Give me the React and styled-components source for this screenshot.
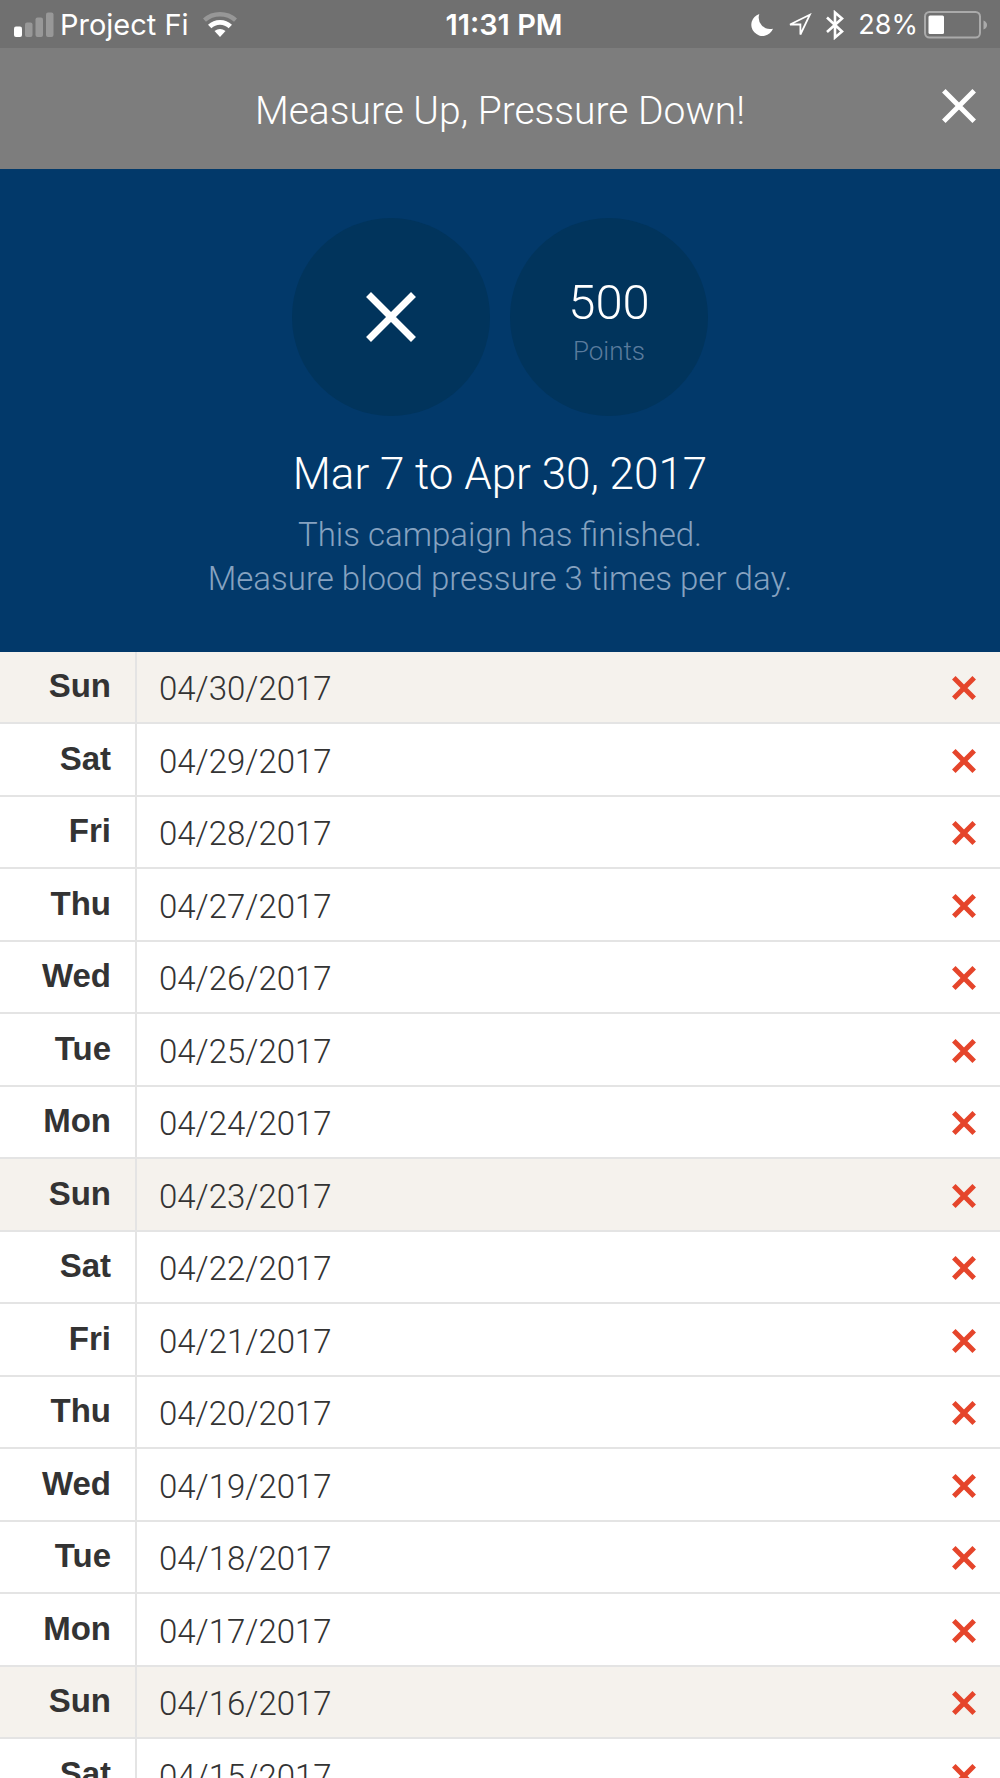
import React from 'react';
import styled, { createGlobalStyle } from 'styled-components';

const GlobalStyle = createGlobalStyle`
  *, *::before, *::after { box-sizing: border-box; }
  html { scrollbar-width: none; }
  body { margin: 0; background: #fff; font-family: Roboto, 'Liberation Sans', sans-serif; font-weight: 300; color: #333; }
`;

const Screen = styled.div`
  display: flex;
  flex-direction: column;
  height: 100vh;
  overflow: hidden;
`;

const StatusBar = styled.div`
  flex: none;
  display: grid;
  grid-template-columns: 1fr auto 1fr;
  align-items: center;
  height: 48px;
  padding: 2px 12px 0 14px;
  background: #707070;
  color: #fff;
  font-family: Inter, 'Liberation Sans', sans-serif;
  font-size: 29px;
  line-height: 46px;
  font-weight: 400;
`;

const StatusGroup = styled.div`
  display: flex;
  align-items: center;
  justify-content: ${(p) => (p.$end ? 'flex-end' : 'flex-start')};
  gap: ${(p) => (p.$end ? '14px' : '6px')};
  svg { display: block; flex: none; }
`;

const Carrier = styled.span`
  padding-right: 8px;
  white-space: nowrap;
`;

const Clock = styled.time`
  padding-left: 6px;
  font-weight: 600;
  white-space: nowrap;
`;

const Power = styled.span`
  display: flex;
  align-items: center;
  gap: 6px;
  font-size: 27px;
`;

const TitleBar = styled.header`
  flex: none;
  display: grid;
  grid-template-columns: 72px 1fr 72px;
  align-items: center;
  height: 121px;
  padding: 0 5px;
  background: #7d7d7d;
  color: #fff;
`;

const Title = styled.h1`
  grid-column: 2;
  margin: 0;
  padding-top: 4px;
  font-size: 39px;
  line-height: 48px;
  font-weight: 300;
  text-align: center;
`;

const CloseButton = styled.button`
  display: grid;
  place-items: center;
  width: 72px;
  height: 72px;
  margin-bottom: 6px;
  padding: 0;
  border: 0;
  background: none;
  color: inherit;
  cursor: pointer;
`;

const Hero = styled.section`
  flex: none;
  display: flex;
  flex-direction: column;
  align-items: center;
  padding: 49px 24px 39px;
  background: #02396a;
  color: #fff;
  text-align: center;
`;

const Badges = styled.div`
  display: flex;
  gap: 20px;
`;

const Badge = styled.div`
  display: flex;
  flex-direction: column;
  align-items: center;
  justify-content: center;
  width: 198px;
  height: 198px;
  border-radius: 50%;
  background: #01345c;
`;

const Score = styled.strong`
  padding-top: 8px;
  font-size: 49px;
  line-height: 60px;
  font-weight: 300;
`;

const ScoreLabel = styled.span`
  font-size: 26px;
  line-height: 36px;
  color: #5a7b9d;
`;

const Period = styled.h2`
  margin: 30px 0 0;
  font-size: 44px;
  line-height: 56px;
  font-weight: 300;
`;

const Description = styled.p`
  margin: 11px 0 0;
  padding-bottom: 12px;
  font-size: 33px;
  line-height: 44px;
  color: #86a2c0;
`;

const Log = styled.main`
  flex: 1;
  min-height: 0;
  overflow-y: auto;
  scrollbar-width: none;
`;

const DayTable = styled.table`
  width: 100%;
  border-collapse: separate;
  border-spacing: 0;
  table-layout: fixed;
`;

const DayRow = styled.tr`
  height: 72px;
  background: ${(p) => (p.$weekStart ? '#f5f2ed' : '#fff')};
  &:nth-child(even) { height: 73px; }
`;

const DayName = styled.th`
  width: 137px;
  padding: 0 24px 2px 0;
  border-right: 2px solid #e4e4e4;
  border-bottom: 2px solid #e4e4e4;
  font-family: 'Liberation Sans', sans-serif;
  font-size: 33px;
  line-height: 40px;
  font-weight: 700;
  text-align: right;
`;

const DayDate = styled.td`
  padding: 4px 0 0 22px;
  border-bottom: 2px solid #e4e4e4;
  font-size: 33px;
  line-height: 40px;
`;

const DayResult = styled.td`
  width: 80px;
  padding: 2px 24px 0 0;
  border-bottom: 2px solid #e4e4e4;
  color: #e5452b;
  svg { display: block; margin-left: auto; }
`;

function Cross({ size, stroke, label }) {
  const a = stroke * 0.36;
  const b = size - a;
  return (
    <svg width={size} height={size} viewBox={`0 0 ${size} ${size}`} role={label ? 'img' : undefined} aria-label={label} aria-hidden={label ? undefined : true}>
      <path d={`M${a} ${a}L${b} ${b}M${b} ${a}L${a} ${b}`} stroke="currentColor" strokeWidth={stroke} />
    </svg>
  );
}

const Signal = () => (
  <svg width="40" height="26" viewBox="0 0 40 26" fill="#fff" aria-hidden="true">
    <rect x="0" y="14.5" width="8" height="10.5" rx="2" />
    <g opacity="0.28">
      <rect x="11" y="10.5" width="7.5" height="14.5" rx="2" />
      <rect x="21.5" y="5.5" width="7.5" height="19.5" rx="2" />
      <rect x="32" y="0.5" width="7.5" height="24.5" rx="2" />
    </g>
  </svg>
);

const Wifi = () => (
  <svg width="34" height="26" viewBox="0 0 34 26" fill="none" stroke="#fff" aria-hidden="true">
    <path d="M1.5 8.2Q8 2.3 17 2.3T32.5 8.2" strokeWidth="4.4" opacity="0.28" />
    <path d="M6.7 14.5Q11 10.3 17 10.3T27.3 14.5" strokeWidth="4.8" />
    <path d="M11.5 19Q17 15.2 22.5 19L17 25Z" fill="#fff" stroke="none" />
  </svg>
);

const Moon = () => (
  <svg width="22" height="22" viewBox="0 0 22 22" fill="#fff" aria-hidden="true">
    <path d="M8.3 0A11.2 11.2 0 1 0 22 14.7A11.5 11.5 0 0 1 8.3 0Z" />
  </svg>
);

const Locate = () => (
  <svg width="25" height="25" viewBox="0 0 25 25" fill="none" stroke="#fff" strokeWidth="1.8" aria-hidden="true">
    <path d="M3 11.5L22.8 1.8L13.4 21.5V11.5Z" />
  </svg>
);

const Bluetooth = () => (
  <svg width="18" height="30" viewBox="0 0 18 30" fill="none" stroke="#fff" strokeWidth="2.6" aria-hidden="true">
    <path d="M1 7.500L16 21.500L9 27.500V2.500L16 8.500L1 22" />
  </svg>
);

const Battery = () => (
  <svg width="64" height="28" viewBox="0 0 64 28" fill="none" aria-hidden="true">
    <rect x="1" y="1" width="55" height="25.5" rx="4.5" stroke="#aaa" strokeWidth="2" />
    <path d="M59.5 9.5Q63 11 63 14T59.5 18.5Z" fill="#aaa" />
    <rect x="4.5" y="4.5" width="15.5" height="18.5" rx="1.5" fill="#fff" />
  </svg>
);

const weekdays = ['Sun', 'Mon', 'Tue', 'Wed', 'Thu', 'Fri', 'Sat'];

const days = Array.from({ length: 16 }, (_, i) => {
  const day = 30 - i;
  return { name: weekdays[new Date(2017, 3, day).getDay()], date: `04/${day}/2017` };
});

export default function App() {
  return (
    <Screen>
      <GlobalStyle />
      <StatusBar>
        <StatusGroup>
          <Signal />
          <Carrier>Project Fi</Carrier>
          <Wifi />
        </StatusGroup>
        <Clock dateTime="23:31">11:31 PM</Clock>
        <StatusGroup $end>
          <Moon />
          <Locate />
          <Bluetooth />
          <Power>
            28%
            <Battery />
          </Power>
        </StatusGroup>
      </StatusBar>
      <TitleBar>
        <Title>Measure Up, Pressure Down!</Title>
        <CloseButton type="button" aria-label="Close">
          <Cross size={34} stroke={5} />
        </CloseButton>
      </TitleBar>
      <Hero>
        <Badges>
          <Badge>
            <Cross size={50} stroke={7} label="Not completed" />
          </Badge>
          <Badge>
            <Score>500</Score>
            <ScoreLabel>Points</ScoreLabel>
          </Badge>
        </Badges>
        <Period>Mar 7 to Apr 30, 2017</Period>
        <Description>
          This campaign has finished.
          <br />
          Measure blood pressure 3 times per day.
        </Description>
      </Hero>
      <Log>
        <DayTable>
          <tbody>
            {days.map((d) => (
              <DayRow key={d.date} $weekStart={d.name === 'Sun'}>
                <DayName scope="row">{d.name}</DayName>
                <DayDate>{d.date}</DayDate>
                <DayResult>
                  <Cross size={24} stroke={5} label="Missed" />
                </DayResult>
              </DayRow>
            ))}
          </tbody>
        </DayTable>
      </Log>
    </Screen>
  );
}
